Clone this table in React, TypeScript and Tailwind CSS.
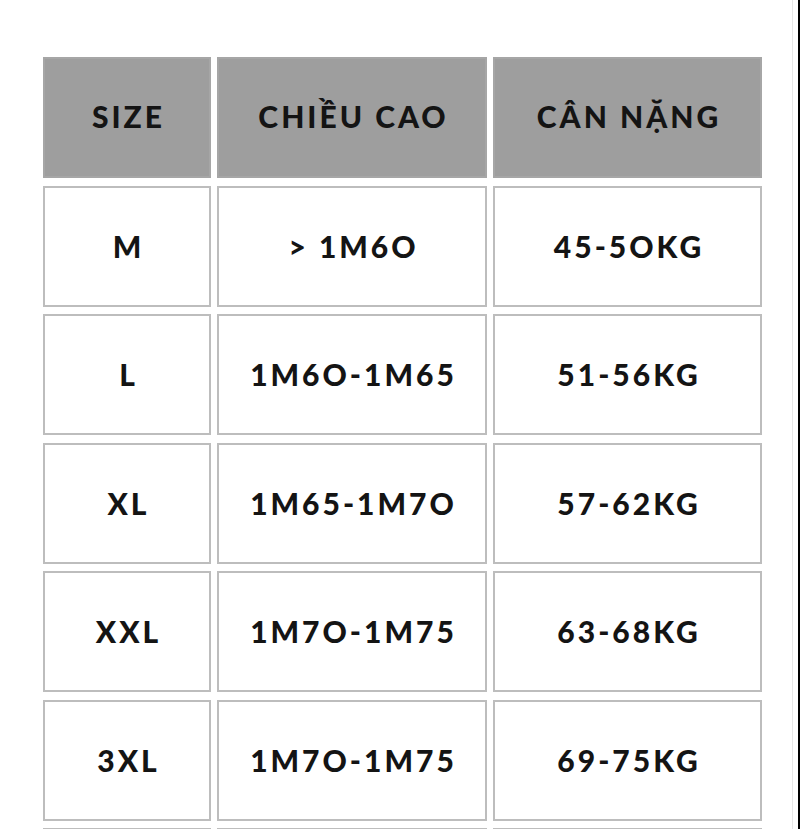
import React from 'react';

const rows = [
  ['M', '> 1M6O', '45-5OKG'],
  ['L', '1M6O-1M65', '51-56KG'],
  ['XL', '1M65-1M7O', '57-62KG'],
  ['XXL', '1M7O-1M75', '63-68KG'],
  ['3XL', '1M7O-1M75', '69-75KG'],
  ['', '', ''],
];

const font = { fontFamily: 'Lato, "Noto Sans", sans-serif' };

const App: React.FC = () => {
  return (
    <div className="flex h-[829px] overflow-hidden bg-white" style={font}>
      <div className="flex-1 border-r border-[#e6e6e6] pl-[43px] pt-[57px]">
        <div className="grid grid-cols-[168px_270px_269px] gap-x-[6px] gap-y-[7.5px] auto-rows-[121px] text-[#141414] font-black text-[30px] tracking-[0.1em]">
          {['SIZE', 'CHIỀU CAO', 'CÂN NẶNG'].map((h) => (
            <div key={h} className="flex items-center justify-center bg-[#9e9e9e] border-2 border-[#a6a6a6] pl-[0.1em] pb-[2px]">
              {h}
            </div>
          ))}
          {rows.map((r, ri) =>
            r.map((c, i) => (
              <div key={ri + '-' + i} className="flex items-center justify-center bg-white border-2 border-[#bdbdbd] pl-[0.1em]">
                {c}
              </div>
            ))
          )}
        </div>
      </div>
      <div className="w-[5px]" />
      <div className="w-[2px] bg-black" />
    </div>
  );
};

export default App;
